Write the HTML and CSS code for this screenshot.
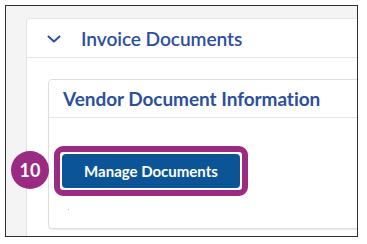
FILE: index.html
```html
<!DOCTYPE html>
<html>
<head>
<meta charset="utf-8">
<link rel="stylesheet" href="styles.css">
</head>
<body>
<div class="frame">
  <div class="outer-card">
    <div class="outer-head">
      <svg class="chev" width="14" height="8" viewBox="0 0 14 8"><path d="M1.5 1.5 L7 6.5 L12.5 1.5" fill="none" stroke="#2c4f9e" stroke-width="2" stroke-linecap="round" stroke-linejoin="round"/></svg>
      <span class="outer-title">Invoice Documents</span>
    </div>
    <div class="outer-body">
      <div class="inner-card">
        <div class="inner-head">Vendor Document Information</div>
        <div class="inner-body">
          <div class="highlight">
            <button class="btn">Manage Documents</button>
          </div>
          <div class="dot"></div>
        </div>
      </div>
    </div>
  </div>
  <div class="badge">10</div>
</div>
</body>
</html>
```

FILE: styles.css
```css
html, body { margin: 0; padding: 0; background: #fff; }
body { font-family: Lato, "Open Sans", sans-serif; }
.frame {
  position: relative;
  margin: 5px 0 0 5px;
  width: 331px;
  height: 218px;
  border: 1.5px solid #2e2e2e;
  background: #f4f4f4;
  overflow: hidden;
  padding: 12px 0 0 20px;
  box-sizing: content-box;
}
.outer-card {
  width: 400px;
  height: 260px;
  background: #fff;
  border-left: 1px solid #e2e2e2;
  border-top: 1px solid #e6e6e6;
  border-top-left-radius: 4px;
}
.outer-head {
  display: flex;
  align-items: center;
  box-sizing: border-box;
  height: 39px;
  border-bottom: 1.5px solid #e8e8e8;
}
.chev { margin-left: 20px; margin-top: 2px; }
.outer-title {
  margin-left: 20px;
  font-size: 19.2px;
  font-weight: 600;
  color: #2c4f9e;
  letter-spacing: -0.1px;
}
.outer-body { padding: 21px 0 0 21px; }
.inner-card {
  border: 1px solid #dedede;
  border-radius: 4px;
  height: 148px;
  box-shadow: 0 1px 1px rgba(0,0,0,0.08);
}
.inner-head {
  height: 38px;
  border-bottom: 1.5px solid #e6e6e6;
  box-sizing: border-box;
  padding: 7px 0 0 14px;
  font-size: 19px;
  font-weight: 700;
  color: #2c4f9e;
  letter-spacing: -0.05px;
}
.inner-body { padding: 28px 0 0 5px; position: relative; }
.highlight {
  display: inline-block;
  border: 6px solid #9b2a82;
  border-radius: 9px;
  padding: 2px;
  background: #fff;
}
.btn {
  display: block;
  width: 178px;
  height: 34px;
  border: none;
  border-radius: 4px;
  background: #0b5596;
  color: #fff;
  font-family: Lato, "Open Sans", sans-serif;
  font-size: 15px;
  font-weight: 700;
  padding: 0;
}
.dot {
  width: 1px; height: 1px; background: #bbb;
  margin: 13px 0 0 14px;
}
.badge {
  position: absolute;
  left: 5px;
  top: 145px;
  width: 38px;
  height: 38px;
  border-radius: 50%;
  background: #9b2a82;
  color: #fff;
  font-size: 18px;
  font-weight: 700;
  display: flex;
  align-items: center;
  justify-content: center;
}
```
